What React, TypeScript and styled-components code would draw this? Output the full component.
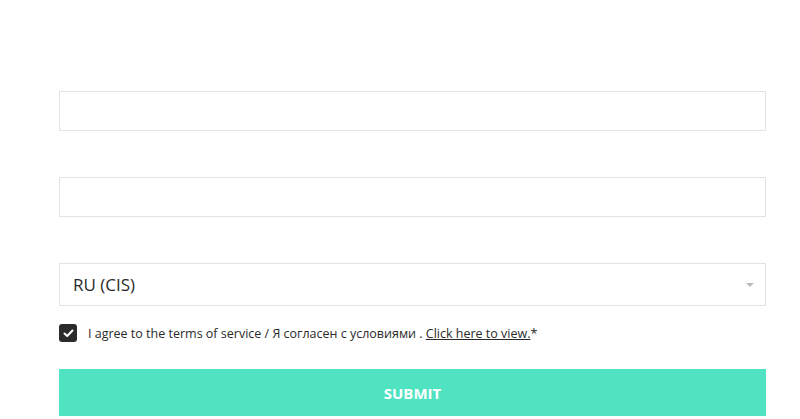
import React from "react";
import styled, { createGlobalStyle } from "styled-components";

const Global = createGlobalStyle`
  html, body { margin: 0; padding: 0; background: #fff; }
  body { font-family: "Open Sans", "Liberation Sans", sans-serif; color: #333; }
  * { box-sizing: border-box; }
`;

const Form = styled.form`
  width: 707px;
  margin-left: 59px;
  padding-top: 91px;
  display: flex;
  flex-direction: column;
`;

const Field = styled.div<{ $mb: number; $h: number }>`
  height: ${(p) => p.$h}px;
  margin-bottom: ${(p) => p.$mb}px;
  border: 1px solid #e3e3e3;
  background: #fff;
  display: flex;
  align-items: center;
  position: relative;
`;

const SelectText = styled.span`
  padding-left: 13px;
  font-size: 17px;
  color: #2a2a2a;
  flex: 1;
`;

const Caret = styled.span`
  width: 0;
  height: 0;
  border-left: 4px solid transparent;
  border-right: 4px solid transparent;
  border-top: 4px solid #bbb;
  margin-right: 11px;
`;

const AgreeRow = styled.label`
  display: flex;
  align-items: center;
  gap: 11px;
  height: 18px;
  margin-top: 18px;
  font-size: 12.5px;
  color: #2a2a2a;
`;

const Box = styled.span`
  width: 18px;
  height: 18px;
  border-radius: 3px;
  background: #2b2b2b;
  display: flex;
  align-items: center;
  justify-content: center;
`;

const Link = styled.a`
  color: #2a2a2a;
  text-decoration: underline;
`;

const Submit = styled.button`
  margin-top: 27px;
  height: 47px;
  border: none;
  background: #50e3c2;
  color: #fff;
  font-family: "Open Sans", "Liberation Sans", sans-serif;
  font-weight: 700;
  font-size: 15px;
  text-transform: uppercase;
  padding: 0;
`;

export default function App() {
  return (
    <>
      <Global />
      <Form onSubmit={(e) => e.preventDefault()}>
        <Field $h={40} $mb={46} />
        <Field $h={40} $mb={46} />
        <Field $h={43} $mb={0}>
          <SelectText>RU (CIS)</SelectText>
          <Caret />
        </Field>
        <AgreeRow>
          <Box>
            <svg width="11" height="9" viewBox="0 0 11 9">
              <path d="M1.5 4.5 L4.2 7 L9.5 1.5" fill="none" stroke="#fff" strokeWidth="2" strokeLinecap="round" strokeLinejoin="round" />
            </svg>
          </Box>
          <span>
            I agree to the terms of service / Я согласен с условиями . <Link href="#">Click here to view.</Link>*
          </span>
        </AgreeRow>
        <Submit type="submit">Submit</Submit>
      </Form>
    </>
  );
}
